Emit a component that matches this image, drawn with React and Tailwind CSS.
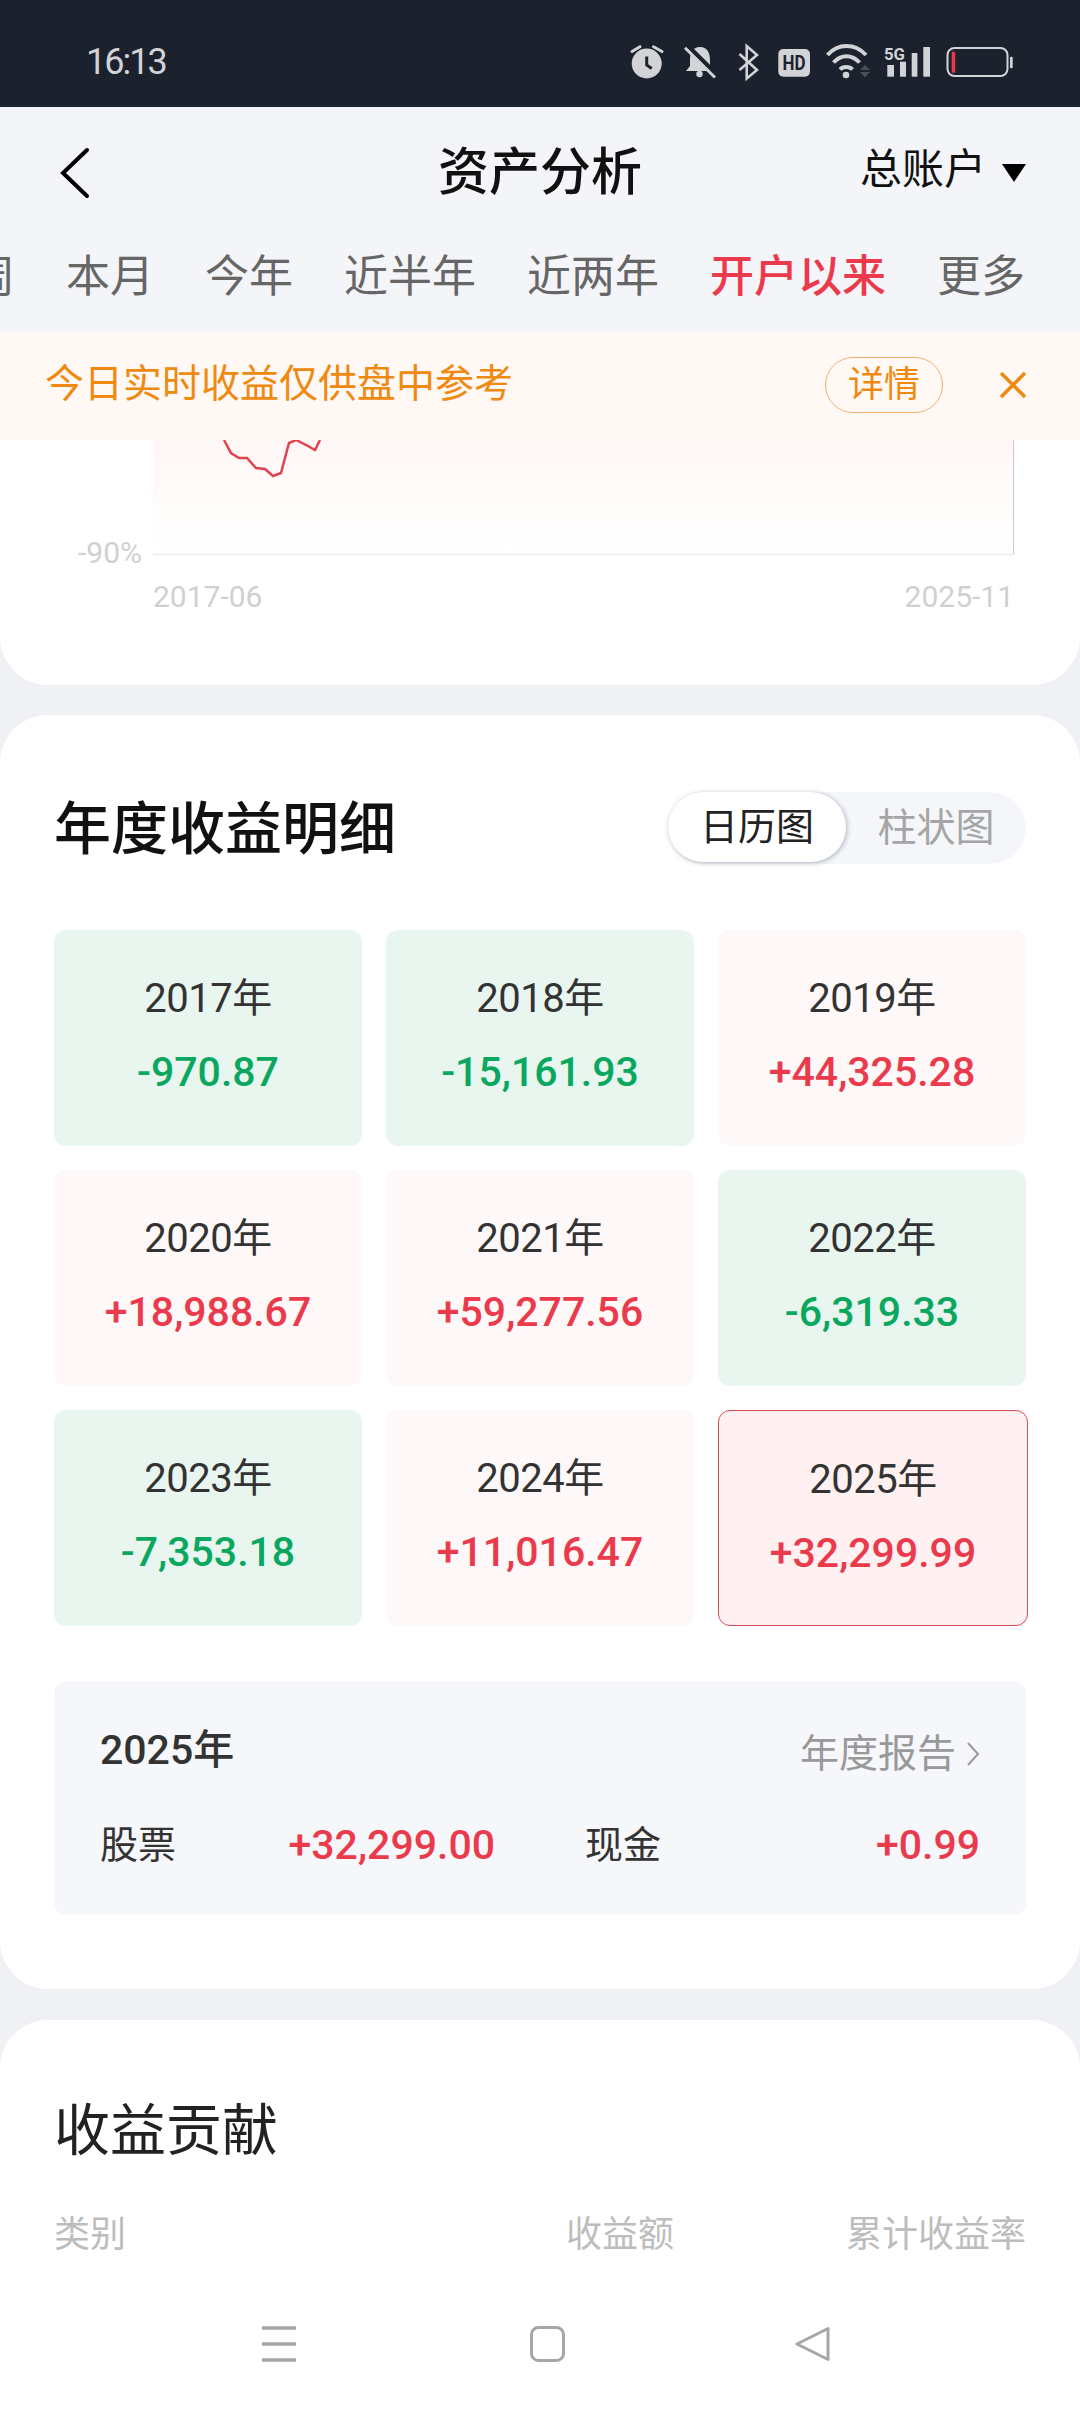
import React from "react";

const FONT = { fontFamily: 'Roboto, "Noto Sans CJK SC", sans-serif' };

const YEARS = [
  { year: "2017年", value: "-970.87", up: false },
  { year: "2018年", value: "-15,161.93", up: false },
  { year: "2019年", value: "+44,325.28", up: true },
  { year: "2020年", value: "+18,988.67", up: true },
  { year: "2021年", value: "+59,277.56", up: true },
  { year: "2022年", value: "-6,319.33", up: false },
  { year: "2023年", value: "-7,353.18", up: false },
  { year: "2024年", value: "+11,016.47", up: true },
  { year: "2025年", value: "+32,299.99", up: true, active: true },
];

const TABS = ["本月", "今年", "近半年", "近两年", "开户以来", "更多"];

const StatusIcons = () => (
  <svg width="400" height="44" viewBox="0 0 400 44" fill="none" className="block">
    {/* alarm */}
    <circle cx="26.7" cy="23.5" r="15" fill="#d2d3d6" />
    <path d="M12 11.5 L20 6.7 M33.5 6.7 L42 11.5" stroke="#d2d3d6" strokeWidth="3" strokeLinecap="round" />
    <path d="M26.7 16.5 V25 L31.7 28.5" stroke="#1c212e" strokeWidth="3" />
    {/* muted bell */}
    <path d="M80 7 C88 7 90 14 90 20 V26 L94 31 H66 L70 26 V20 C70 14 72 7 80 7Z" fill="#d2d3d6" />
    <circle cx="79.5" cy="34" r="3.2" fill="#d2d3d6" />
    <path d="M66 5 L96 35" stroke="#1c212e" strokeWidth="6" />
    <path d="M65 7.7 L95 37.5" stroke="#d2d3d6" strokeWidth="3" />
    {/* bluetooth */}
    <path d="M119.5 14 L137 30 L126.7 38.5 V6 L137 15 L119.5 30" stroke="#d2d3d6" strokeWidth="2.6" />
    {/* hd */}
    <rect x="158.3" y="9" width="31.7" height="27.7" rx="5" fill="#d2d3d6" />
    <text x="174" y="29.5" textAnchor="middle" fontSize="20" fontWeight="700" fill="#1c212e" fontFamily="Roboto, sans-serif" textLength="23" lengthAdjust="spacingAndGlyphs">HD</text>
    {/* wifi */}
    <path d="M207.5 15 C218 3 235 3 246 15" stroke="#d2d3d6" strokeWidth="4" />
    <path d="M213.5 22.5 C221 14 232 14 239.5 22.5" stroke="#d2d3d6" strokeWidth="4" />
    <path d="M220 29.5 C223 26 229.5 26 232.5 29.5" stroke="#d2d3d6" strokeWidth="4" />
    <circle cx="226" cy="35" r="3.3" fill="#d2d3d6" />
    <path d="M240 30 L245 25 L250 30Z M240 32 L245 37.5 L250 32Z" fill="#4a4e59" />
    {/* 5g and signal */}
    <text x="264" y="19.5" fontSize="17" fontWeight="700" fill="#d2d3d6" fontFamily="Roboto, sans-serif" textLength="21" lengthAdjust="spacingAndGlyphs">5G</text>
    <rect x="267.3" y="25" width="6.7" height="11.7" fill="#d2d3d6" />
    <rect x="280" y="21.7" width="6" height="15" fill="#d2d3d6" />
    <rect x="291.7" y="13" width="5.7" height="23.7" fill="#d2d3d6" />
    <rect x="303.3" y="7" width="6.7" height="29.7" fill="#d2d3d6" />
    {/* battery */}
    <rect x="327.5" y="8" width="60" height="28" rx="7" stroke="#d2d3d6" strokeWidth="2" />
    <rect x="331.7" y="11.7" width="3.5" height="21" rx="1" fill="#e8384a" />
    <rect x="390" y="16.7" width="2.7" height="11.6" rx="1" fill="#d2d3d6" />
  </svg>
);

const YearCell = ({ year, value, up, active }) => (
  <div
    className={`flex h-[216px] flex-col items-center rounded-xl pt-[44px] ${
      active
        ? "-mb-[3px] -mr-[2px] border border-[#db4c59] bg-[#fff0f1]"
        : up
        ? "bg-[#fff8f8]"
        : "bg-[#e9f6f0]"
    }`}
  >
    <div className="text-[40px] leading-[50px] tracking-[-0.5px] text-[#333333]">{year}</div>
    <div className={`mt-[23px] text-[41px] leading-[50px] font-medium ${up ? "text-[#ea3a4b]" : "text-[#0aa85f]"}`}>
      {value}
    </div>
  </div>
);

export default function App() {
  return (
    <div style={FONT} className="flex h-[2412px] w-[1080px] flex-col overflow-hidden bg-[#eff1f5]">
      {/* status bar */}
      <div className="flex h-[107px] shrink-0 items-start justify-between bg-[#1c212e] pt-[40px] pr-[60px] pl-[86px]">
        <span className="text-[36px] leading-[44px] tracking-[-2px] text-[#d2d3d6]">16:13</span>
        <StatusIcons />
      </div>

      {/* title row */}
      <div className="relative flex h-[118px] shrink-0 items-center justify-center bg-[#f4f5f9]">
        <svg width="32" height="52" viewBox="0 0 32 52" fill="none" className="absolute top-[40px] left-[59px]">
          <path d="M28 3 L4 26 L28 49" stroke="#000" strokeWidth="4" strokeLinecap="round" />
        </svg>
        <span className="mt-[13px] text-[51px] leading-[60px] font-medium text-[#111111]">资产分析</span>
        <div className="absolute top-[38px] right-[54px] flex items-center gap-[16px]">
          <span className="text-[42px] leading-[50px] text-[#111111]">总账户</span>
          <span className="mt-[6px] h-0 w-0 border-x-[12px] border-t-[18px] border-x-transparent border-t-black" />
        </div>
      </div>

      {/* period tabs */}
      <div className="flex h-[107px] shrink-0 items-start gap-[51px] overflow-hidden bg-[#f4f5f9] pt-[26px] pl-[68px] text-[44px] leading-[52px] whitespace-nowrap text-[#666666]">
        <span className="-ml-[97px]">周</span>
        {TABS.map((t) => (
          <span key={t} className={t === "开户以来" ? "font-medium text-[#ea3a4b]" : ""}>
            {t}
          </span>
        ))}
      </div>

      {/* notice */}
      <div className="flex h-[108px] shrink-0 items-center bg-[#fff8f4] pr-[53px] pb-[3px] pl-[45px]">
        <span className="text-[39px] text-[#f0890f]">今日实时收益仅供盘中参考</span>
        <span className="ml-auto flex h-[56px] w-[118px] items-center justify-center rounded-full border border-[#efb06e] text-[36px] text-[#f0890f]">
          详情
        </span>
        <svg width="28" height="28" viewBox="0 0 28 28" fill="none" className="ml-[56px]">
          <path d="M2 2 L26 26 M26 2 L2 26" stroke="#f0890f" strokeWidth="3.5" />
        </svg>
      </div>

      {/* chart tail */}
      <div className="h-[245px] shrink-0 rounded-b-[48px] bg-white">
        <div className="flex">
          <div className="flex w-[153px] shrink-0 justify-end pt-[97px] pr-[11px] text-[30px] leading-[32px] text-[#d0d0d0]">-90%</div>
          <svg width="862" height="116" viewBox="0 0 862 116" fill="none" className="block">
            <defs>
              <linearGradient id="areaFade" x1="0" y1="0" x2="0" y2="1">
                <stop offset="0" stopColor="#fff7f5" />
                <stop offset="1" stopColor="#ffffff" />
              </linearGradient>
            </defs>
            <rect x="0" y="0" width="861" height="114" fill="url(#areaFade)" />
            <path d="M0 114.5 H861" stroke="#ececef" strokeWidth="1.5" />
            <path d="M860.5 0 V114" stroke="#c9c9cc" strokeWidth="1" />
            <path
              d="M71 0 L78 13 L86 18 L94 18 L103 28 L112 29 L120 36 L128 33 L136 3 L143 0 L155 6 L162 10 L167 0"
              stroke="#e0434f"
              strokeWidth="2.5"
              fill="none"
            />
          </svg>
        </div>
        <div className="mt-[12px] flex justify-between pr-[66px] pl-[153px] text-[30px] leading-[32px] text-[#d0d0d0]">
          <span>2017-06</span>
          <span>2025-11</span>
        </div>
      </div>

      {/* yearly detail */}
      <div className="mt-[30px] h-[1274px] shrink-0 rounded-[48px] bg-white px-[54px] pt-[76px]">
        <div className="flex items-center justify-between">
          <h2 className="pt-[4px] text-[57px] leading-[70px] font-medium text-[#111111]">年度收益明细</h2>
          <div className="flex h-[72px] w-[358px] items-center rounded-full bg-[#f4f6fa] text-[39px]">
            <span className="flex h-[70px] w-[178px] items-center justify-center self-start rounded-full bg-white text-[38px] text-[#222222] shadow-[1px_1px_5px_rgba(90,100,110,0.45)]">
              日历图
            </span>
            <span className="flex-1 text-center text-[#a5a5a5]">柱状图</span>
          </div>
        </div>

        <div className="mt-[65px] grid grid-cols-3 gap-x-[24px] gap-y-[24px]">
          {YEARS.map((y) => (
            <YearCell key={y.year} {...y} />
          ))}
        </div>

        <div className="mt-[55px] h-[234px] rounded-xl bg-[#f6f7fb] px-[46px] pt-[44px]">
          <div className="flex items-start justify-between">
            <span className="text-[41px] leading-[50px] font-medium text-[#333333]">2025年</span>
            <span className="flex items-center gap-[10px] pt-[4px] text-[39px] leading-[50px] text-[#999999]">
              年度报告
              <svg width="14" height="26" viewBox="0 0 14 26" fill="none">
                <path d="M2 2 L12 13 L2 24" stroke="#999999" strokeWidth="2" />
              </svg>
            </span>
          </div>
          <div className="mt-[41px] grid grid-cols-2 gap-x-[90px] text-[38px] leading-[50px]">
            <div className="flex items-center justify-between">
              <span className="text-[#333333]">股票</span>
              <span className="text-[41px] font-medium text-[#ea3a4b]">+32,299.00</span>
            </div>
            <div className="flex items-center justify-between">
              <span className="text-[#333333]">现金</span>
              <span className="text-[41px] font-medium text-[#ea3a4b]">+0.99</span>
            </div>
          </div>
        </div>
      </div>

      {/* contribution + nav */}
      <div className="mt-[31px] flex flex-1 flex-col rounded-t-[48px] bg-white px-[54px] pt-[76px]">
        <h2 className="text-[56px] leading-[70px] text-[#222222]">收益贡献</h2>
        <div className="mt-[47px] flex text-[36px] leading-[44px] text-[#bdbdbd]">
          <span>类别</span>
          <span className="ml-[440px]">收益额</span>
          <span className="ml-auto">累计收益率</span>
        </div>
        <div className="mt-[69px] flex items-center">
          <svg width="34" height="36" viewBox="0 0 34 36" className="ml-[208px]" fill="none">
            <path d="M0 2 H34 M0 18 H34 M0 34 H34" stroke="#a6a6a6" strokeWidth="3.4" />
          </svg>
          <svg width="35" height="36" viewBox="0 0 35 36" className="ml-[234px]" fill="none">
            <rect x="1.5" y="1.5" width="32" height="33" rx="7" stroke="#a6a6a6" strokeWidth="3" />
          </svg>
          <svg width="35" height="36" viewBox="0 0 35 36" className="ml-[230px]" fill="none">
            <path d="M33 2.5 V33.5 L2 18 Z" stroke="#a6a6a6" strokeWidth="3" strokeLinejoin="round" />
          </svg>
        </div>
      </div>
    </div>
  );
}
